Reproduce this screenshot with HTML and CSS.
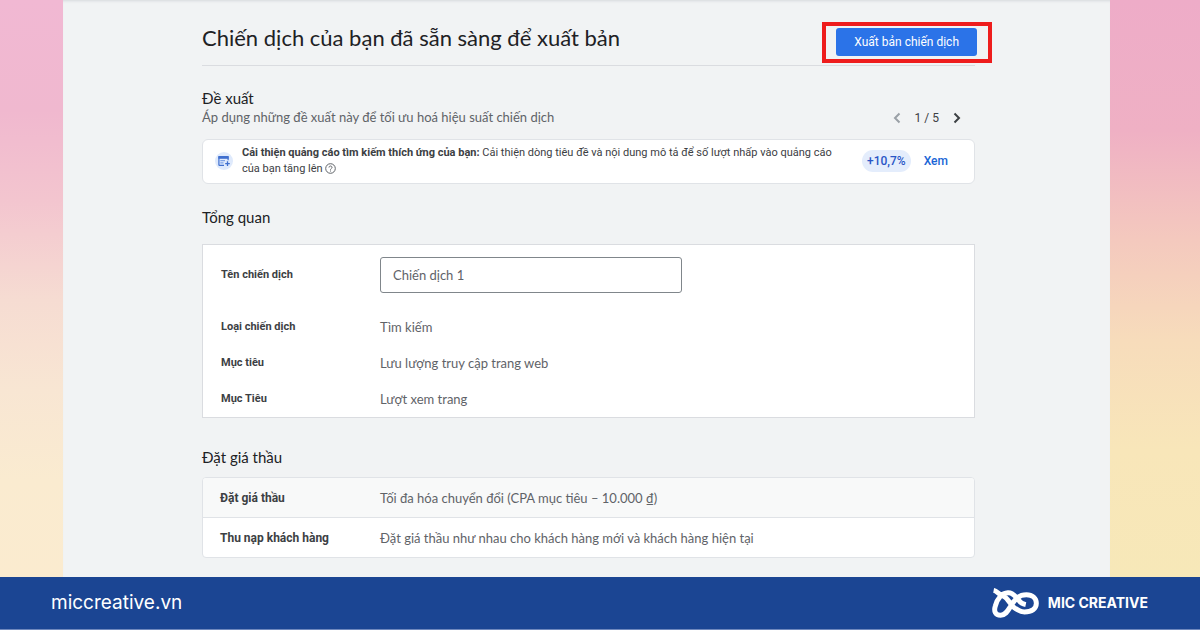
FILE: index.html
```html
<!DOCTYPE html>
<html lang="vi">
<head>
<meta charset="utf-8">
<title>Xuất bản chiến dịch</title>
<link rel="stylesheet" href="styles.css">
</head>
<body>
<main class="screen">
  <header class="header">
    <h1 class="title">Chiến dịch của bạn đã sẵn sàng để xuất bản</h1>
    <div class="publish">
      <button class="publish-button" type="button">Xuất bản chiến dịch</button>
      <span class="highlight"></span>
    </div>
  </header>

  <section class="suggestions">
    <div class="suggestions-head">
      <div>
        <h2 class="heading">Đề xuất</h2>
        <p class="subtitle">Áp dụng những đề xuất này để tối ưu hoá hiệu suất chiến dịch</p>
      </div>
      <nav class="pager" aria-label="Đề xuất">
        <button class="pager-button muted" type="button" aria-label="Trước">
          <svg width="8" height="12" viewBox="0 0 8 12"><path d="M6.500 1.500 2 6l4.500 4.500"/></svg>
        </button>
        <span>1 / 5</span>
        <button class="pager-button" type="button" aria-label="Sau">
          <svg width="8" height="12" viewBox="0 0 8 12"><path d="M1.500 1.500 6 6l-4.500 4.500"/></svg>
        </button>
      </nav>
    </div>
    <article class="tip">
      <svg class="tip-icon" width="18" height="18" viewBox="0 0 18 18">
        <circle cx="9" cy="9" r="9" fill="#dfeafc"/>
        <path d="M9 13.400H4.600c-.4 0-.7-.3-.7-.7V5.300c0-.4.300-.7.700-.7h7.800c.4 0 .7.300.7.700v3" fill="none" stroke="#3f6fcf" stroke-width="1.200"/>
        <path d="M3.400 4h10.200v2.800H3.400z" fill="#3f6fcf"/>
        <path d="M5.300 8.700h4.700M5.300 10.800h3.200" stroke="#7fa3e6" stroke-width="1.200"/>
        <path d="M12.500 9.300v4.600M10.200 11.600h4.600" stroke="#3f6fcf" stroke-width="1.300"/>
      </svg>
      <p class="tip-text"><strong>Cải thiện quảng cáo tìm kiếm thích ứng của bạn:</strong> Cải thiện dòng tiêu đề và nội dung mô tả để số lượt nhấp vào quảng cáo của bạn tăng lên
        <svg class="help" width="11" height="11" viewBox="0 0 11 11"><circle cx="5.500" cy="5.500" r="4.800"/><path d="M4 4.500c0-2 3-2 3 0 0 1-1.500 1.100-1.500 2.200M5.500 7.500v1"/></svg>
      </p>
      <span class="score">+10,7%</span>
      <a class="view" href="#">Xem</a>
    </article>
  </section>

  <section class="overview">
    <h2 class="heading">Tổng quan</h2>
    <div class="panel">
      <div class="row name-row">
        <label class="label" for="campaign">Tên chiến dịch</label>
        <input class="name-input" id="campaign" type="text" value="Chiến dịch 1">
      </div>
      <div class="row"><span class="label">Loại chiến dịch</span><span>Tìm kiếm</span></div>
      <div class="row"><span class="label">Mục tiêu</span><span>Lưu lượng truy cập trang web</span></div>
      <div class="row"><span class="label">Mục Tiêu</span><span>Lượt xem trang</span></div>
    </div>
  </section>

  <section class="bidding">
    <h2 class="heading">Đặt giá thầu</h2>
    <table class="bids">
      <tr class="tinted"><th scope="row">Đặt giá thầu</th><td>Tối đa hóa chuyển đổi (CPA mục tiêu – 10.000 ₫)</td></tr>
      <tr><th scope="row">Thu nạp khách hàng</th><td>Đặt giá thầu như nhau cho khách hàng mới và khách hàng hiện tại</td></tr>
    </table>
  </section>
</main>
<footer class="footer">
  <a class="site" href="#">miccreative.vn</a>
  <div class="brand">
    <svg width="47" height="30" viewBox="12 14 142 90" fill="none" stroke="#fff" stroke-width="15">
      <path d="M17 21C28 23 32 34 46 38C60 44 66 62 78 72C88 80 98 86 110 86C132 86 146 76 146 60C146 44 134 34 116 34C92 34 82 48 70 66C60 82 54 96 38 96C22 96 17 84 22 68C28 46 42 29 60 28C76 27 86 42 93 51C98 58 104 62 114 64"/>
    </svg>
    <span>MIC CREATIVE</span>
  </div>
</footer>
</body>
</html>
```
FILE: styles.css
```css
* { box-sizing: border-box; }
body {
  margin: 0;
  min-height: 100vh;
  display: flex;
  flex-direction: column;
  font: 13px/18px Lato, Roboto, sans-serif;
  color: #5f6368;
  background:
    linear-gradient(#eeacc8 0, #efb0c4 130px, #f4c9be 240px, #f7dcbb 340px, #f8e6b9 450px, #f7e8b8 577px) right / 50% 100% no-repeat,
    linear-gradient(#f1b8d3 0, #f0b8cf 110px, #f3c5cf 200px, #f6dcd2 300px, #f8e6d3 390px, #faebd0 480px, #fbebcf 577px) left / 50% 100% no-repeat;
}
h1, h2, p { margin: 0; font-weight: 400; }
button, input { font: inherit; color: inherit; }
a { text-decoration: none; }

.screen {
  flex: 1;
  margin: 0 90px 0 63px;
  padding: 0 135px 19px 139px;
  background: #f1f3f4;
  box-shadow: inset 0 3px 3px -2px #d5d8dc;
}
.header {
  display: flex;
  justify-content: space-between;
  align-items: flex-start;
  padding: 24px 0 9px;
  border-bottom: 1px solid #dadce0;
}
.title { font-size: 22px; line-height: 28px; color: #202124; }
.publish { position: relative; margin: 4px -2px 0 0; }
.publish-button {
  display: block;
  padding: 0 18px;
  height: 28px;
  border: 0;
  border-radius: 3px;
  background: #2b73e8;
  color: #fff;
  font: 12px/16px Roboto, sans-serif;
}
.highlight { position: absolute; inset: -6px -15px -7px -14px; border: 4px solid #ee1c1c; pointer-events: none; }

.heading { font-size: 15px; line-height: 20px; color: #202124; }
.suggestions { padding-top: 22px; }
.suggestions-head { display: flex; justify-content: space-between; align-items: flex-end; }
.pager { display: flex; align-items: center; gap: 14px; padding-right: 14px; font: 12px/16px Roboto, sans-serif; color: #3c4043; }
.pager-button { display: flex; padding: 0; border: 0; background: none; color: #3c4043; }
.pager-button svg { fill: none; stroke: currentColor; stroke-width: 2; }
.muted { color: #9aa0a6; }

.tip {
  display: flex;
  align-items: center;
  margin-top: 13px;
  padding: 5px 26px 6px 12px;
  border: 1px solid #e0e3e7;
  border-radius: 6px;
  background: #fff;
  font-family: Roboto, sans-serif;
}
.tip-icon { flex: none; margin-right: 9px; }
.tip-text { flex: 1; padding-right: 8px; font-size: 11px; line-height: 16px; color: #3c4043; }
.tip-text strong { font-weight: 700; }
.help { fill: none; stroke: #5f6368; vertical-align: -2px; }
.score { margin-left: 4px; padding: 2px 5px; border-radius: 11px; background: #e4edfc; color: #2a56c6; font-size: 12px; font-weight: 500; }
.view { margin-left: 13px; color: #1a66d6; font-size: 12px; font-weight: 500; }

.overview { padding-top: 23px; }
.panel { margin-top: 17px; padding: 12px 18px 0; border: 1px solid #dadce0; background: #fff; }
.row { display: grid; grid-template-columns: 159px 1fr; align-items: center; min-height: 36px; }
.name-row { margin-bottom: 16px; }
.label { font: 700 11px/16px Roboto, sans-serif; color: #3c4043; }
.name-input {
  width: 302px;
  height: 36px;
  padding: 0 12px;
  border: 1px solid #80868b;
  border-radius: 3px;
  background: #fff;
}

.bidding { padding-top: 29px; }
.bids {
  width: 100%;
  margin-top: 10px;
  border: 1px solid #e0e3e7;
  border-radius: 4px;
  border-spacing: 0;
  background: #fff;
  overflow: hidden;
}
.bids th, .bids td { height: 39px; padding: 0; text-align: left; }
.bids th { width: 177px; padding-left: 17px; font: 700 12px/18px Roboto, sans-serif; color: #3c4043; }
.tinted { background: #f8f9f9; }
.tinted th, .tinted td { height: 40px; border-bottom: 1px solid #e0e3e7; }

.footer {
  display: flex;
  justify-content: space-between;
  align-items: center;
  height: 53px;
  padding: 0 52px 0 51px;
  border-bottom: 1px solid #6f88bd;
  background: #1b4593;
  color: #fff;
}
.site { color: #fff; font: 19px/24px Inter, sans-serif; }
.brand { display: flex; align-items: center; gap: 9px; font: 700 14px/20px Inter, sans-serif; }
```
